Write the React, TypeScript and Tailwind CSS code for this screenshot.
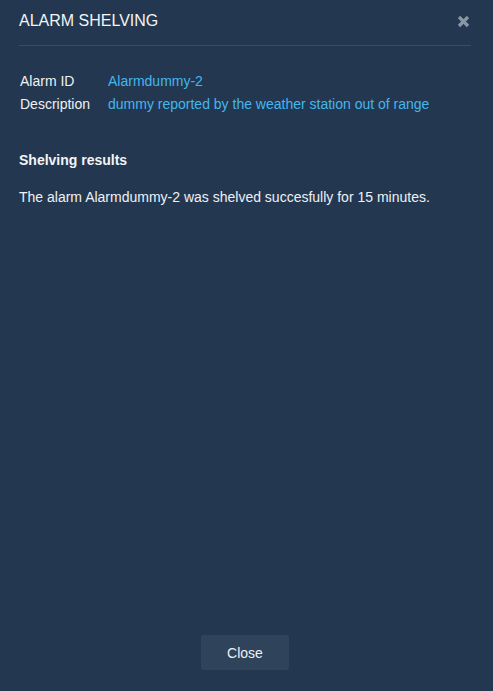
export default function App() {
  return (
    <div className="h-[691px] w-full bg-[#233850] flex flex-col font-['Liberation_Sans',Arial,sans-serif] text-white">
      {/* Header */}
      <div className="ml-[19px] mr-[22px] pt-[11px] pb-[14px] flex items-center justify-between border-b border-[#3b4d63]">
        <h1 className="text-base leading-5 text-[#f2f4f7]">ALARM SHELVING</h1>
        <button className="mr-[1px] text-[#8a96a5]" aria-label="close">
          <svg width="13" height="13" viewBox="0 0 13 13">
            <path d="M2 2 L11 11 M11 2 L2 11" stroke="currentColor" strokeWidth="3.2" strokeLinecap="butt" />
          </svg>
        </button>
      </div>

      {/* Alarm details */}
      <table className="ml-[20px] mt-[24px] text-sm leading-[23px] w-fit">
        <tbody>
          <tr>
            <td className="w-[88px] text-[#eef1f4]">Alarm ID</td>
            <td className="text-[#44b6ee]">Alarmdummy-2</td>
          </tr>
          <tr>
            <td className="w-[88px] text-[#eef1f4]">Description</td>
            <td className="text-[#44b6ee]">dummy reported by the weather station out of range</td>
          </tr>
        </tbody>
      </table>

      {/* Results */}
      <div className="mx-[19px] mt-[34px]">
        <h2 className="text-sm leading-5 font-bold text-[#f2f4f7]">Shelving results</h2>
        <p className="mt-[17px] text-sm leading-5 text-[#eef1f4]">
          The alarm Alarmdummy-2 was shelved succesfully for 15 minutes.
        </p>
      </div>

      {/* Footer */}
      <div className="mt-auto mb-[21px] pr-[3px] flex justify-center">
        <button className="w-[88px] h-[35px] rounded-[2px] bg-[#2f435b] text-sm text-[#eef1f4]">Close</button>
      </div>
    </div>
  );
}
